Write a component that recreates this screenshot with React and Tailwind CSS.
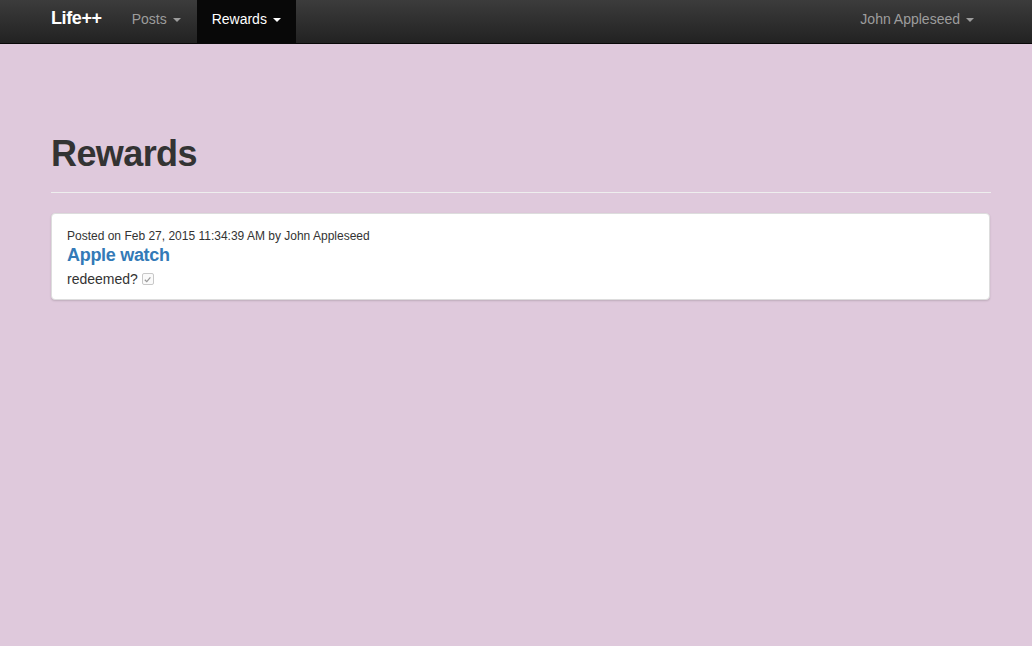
import React from 'react';

const Caret = () => (
  <span className="inline-block ml-[6px] align-middle w-0 h-0 border-t-[4px] border-t-current border-x-[4px] border-x-transparent" />
);

const CheckedBox = () => (
  <span className="ml-[4px] inline-flex items-center justify-center w-[12px] h-[12px] rounded-[2px] border border-[#c8c8c8] bg-[#fafafa]">
    <svg viewBox="0 0 10 10" className="w-[9px] h-[9px]">
      <path d="M2 5.2 L4.2 7.4 L8.2 2.6" fill="none" stroke="#9a9a9a" strokeWidth="1.4" />
    </svg>
  </span>
);

const App = () => {
  return (
    <div className="min-h-[646px] bg-[#dfc9dc] font-['Liberation_Sans',Arial,sans-serif] text-[#333] text-[14px]">
      <nav className="h-[44px] bg-gradient-to-b from-[#3c3c3c] to-[#222] border-b border-[#080808]">
        <div className="flex h-full items-stretch pl-[51px] pr-[43px]">
          <a className="pt-[8px] leading-[20px] text-white text-[18px] font-bold pr-[15px] tracking-[-0.4px]">Life++</a>
          <a className="pt-[9px] leading-[20px] text-[#9d9d9d] pl-[15px] pr-[16px]">
            Posts
            <Caret />
          </a>
          <a className="pt-[9px] leading-[20px] text-white px-[15px] bg-[#080808]">
            Rewards
            <Caret />
          </a>
          <div className="flex-1" />
          <a className="pt-[9px] leading-[20px] text-[#9d9d9d] px-[15px]">
            John Appleseed
            <Caret />
          </a>
        </div>
      </nav>

      <div className="ml-[51px] mr-[41px] pt-[88px]">
        <h1 className="text-[36px] leading-[44px] font-bold tracking-[-0.6px] text-[#333] pb-[16px] border-b border-[#eee]">Rewards</h1>

        <div className="mt-[20px] mr-[1px] bg-white rounded-[4px] shadow-[0_1px_2px_rgba(0,0,0,0.15)] border border-[#ddd] px-[15px] pt-[14px] pb-[10px]">
          <div className="text-[12px] leading-[17px] text-[#333]">
            Posted on Feb 27, 2015 11:34:39 AM by John Appleseed
          </div>
          <div className="text-[18px] leading-[20px] font-bold tracking-[-0.3px] text-[#337ab7]">Apple watch</div>
          <div className="mt-[4px] flex items-center leading-[20px]">
            redeemed?
            <CheckedBox />
          </div>
        </div>
      </div>
    </div>
  );
};

export default App;
